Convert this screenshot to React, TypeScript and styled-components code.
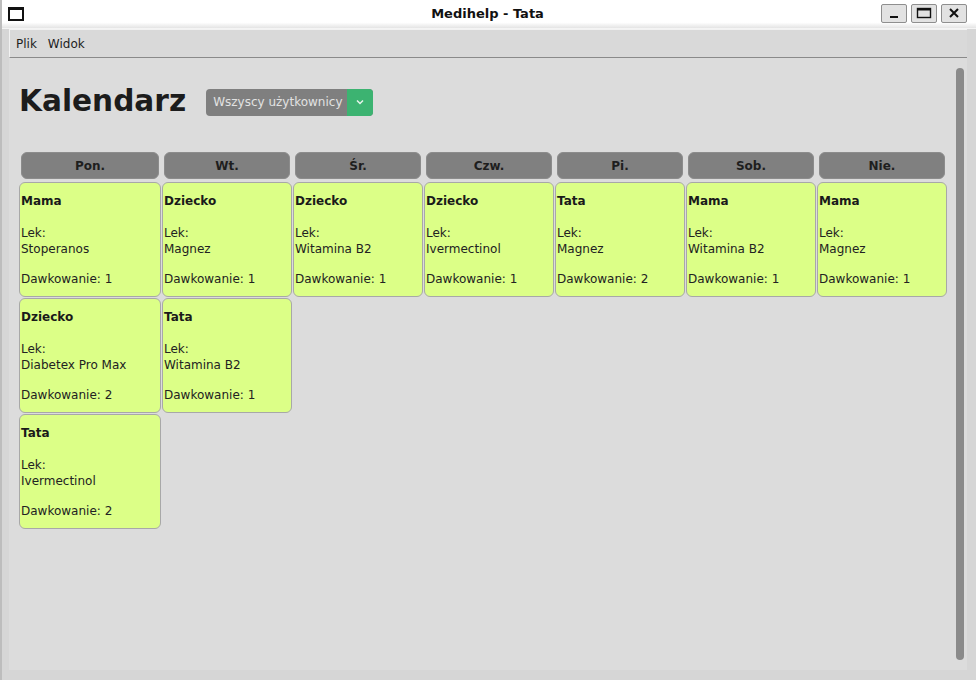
import React from 'react'
import styled, { createGlobalStyle } from 'styled-components'

const GlobalStyle = createGlobalStyle`
  html, body {
    margin: 0;
    padding: 0;
    background: #a8a8a8;
  }
  body {
    font-family: 'DejaVu Sans', 'Liberation Sans', sans-serif;
    font-size: 12px;
    color: #1e1e1e;
  }
`

const Window = styled.div`
  width: 976px;
  height: 680px;
  box-sizing: border-box;
  display: flex;
  flex-direction: column;
  background: #d6d6d6;
  border-left: 2px solid #bdbdbd;
  overflow: hidden;
`

const TitleBar = styled.div`
  height: 28px;
  flex-shrink: 0;
  display: flex;
  align-items: center;
  padding: 0 9px 0 6px;
  background: linear-gradient(#ffffff 0%, #ffffff 80%, #e4e4e4 100%);
  border-bottom: 1px solid #f4f4f4;
`

const TitleIcon = styled.div`
  width: 12px;
  height: 9px;
  border: 2px solid #111;
  border-top-width: 3px;
  background: #fff;
  margin-top: -1px;
`

const TitleText = styled.div`
  flex: 1;
  text-align: center;
  font-weight: bold;
  font-size: 13px;
  color: #111;
  padding-left: 70px;
  margin-top: -2px;
`

const WinButtons = styled.div`
  display: flex;
  gap: 4px;
  margin-top: -2px;
`

const WinButton = styled.div`
  width: 24px;
  height: 17px;
  border: 1px solid #8e8e8e;
  border-radius: 2px;
  background: #e2e2e2;
  display: flex;
  align-items: center;
  justify-content: center;
`

const Body = styled.div`
  flex: 1;
  display: flex;
  flex-direction: column;
  margin: 0 9px 0 7px;
  padding-bottom: 10px;
  box-shadow: 0 10px 0 #c0c0c0;
  min-height: 0;
`

const MenuBar = styled.div`
  flex-shrink: 0;
  display: flex;
  align-items: center;
  gap: 11px;
  padding-left: 6px;
  background: #d9d9d9;
  border-top: 1px solid #f2f2f2;
  border-left: 1px solid #f2f2f2;
  border-bottom: 1px solid #8a8a8a;
  box-sizing: border-box;
  height: 29px;
`

const MenuItem = styled.span`
  font-size: 12px;
  color: #1e1e1e;
`

const Client = styled.div`
  flex: 1;
  display: flex;
  background: #dcdcdc;
  min-height: 0;
`

const Main = styled.div`
  flex: 1;
  padding: 26px 0 0 10px;
`

const HeaderRow = styled.div`
  display: flex;
  align-items: center;
  gap: 20px;
  height: 35px;
`

const Heading = styled.h1`
  margin: 0;
  font-size: 29.6px;
  line-height: 35px;
  font-weight: bold;
  color: #1c1c1c;
`

const Combo = styled.div`
  display: flex;
  height: 27px;
  border-radius: 4px;
  overflow: hidden;
  background: #7f7f7f;
  margin-top: 1px;
`

const ComboText = styled.div`
  display: flex;
  align-items: center;
  padding: 0 5px 1px 7px;
  color: #e2e2e2;
  font-size: 12px;
`

const ComboArrow = styled.div`
  width: 26px;
  background: #3cb371;
  display: flex;
  align-items: center;
  justify-content: center;
`

const Week = styled.div`
  display: grid;
  grid-template-columns: 142px repeat(6, 130px);
  column-gap: 1px;
  margin-top: 33px;
  align-items: start;
`

const DayColumn = styled.div`
  display: flex;
  flex-direction: column;
  gap: 1px;
`

const DayHeader = styled.div`
  height: 27px;
  margin: 0 2px 2px;
  box-sizing: border-box;
  border-radius: 6px;
  background: #808080;
  border: 1px solid #8c8c8c;
  display: flex;
  align-items: center;
  justify-content: center;
  font-weight: bold;
  font-size: 12px;
  color: #1e1e1e;
`

const Card = styled.div`
  box-sizing: border-box;
  height: 115px;
  padding: 10px 2px 9px 1px;
  border: 1px solid #a8a8a8;
  border-radius: 6px;
  background: #dcff87;
  line-height: 16px;
  font-size: 12px;
  color: #222;
`

const Person = styled.div`
  font-weight: bold;
  color: #1a1a1a;
  margin-bottom: 16px;
`

const DoseLine = styled.div`
  margin-top: 14px;
`

const ScrollTrack = styled.div`
  width: 11px;
  padding: 10px 3px 10px 0;
  box-sizing: border-box;
  display: flex;
`

const ScrollThumb = styled.div`
  width: 8px;
  flex: 1;
  border-radius: 4px;
  background: #8a8a8a;
`

type Dose = { person: string; drug: string; amount: number }

const days: { name: string; doses: Dose[] }[] = [
  {
    name: 'Pon.',
    doses: [
      { person: 'Mama', drug: 'Stoperanos', amount: 1 },
      { person: 'Dziecko', drug: 'Diabetex Pro Max', amount: 2 },
      { person: 'Tata', drug: 'Ivermectinol', amount: 2 },
    ],
  },
  {
    name: 'Wt.',
    doses: [
      { person: 'Dziecko', drug: 'Magnez', amount: 1 },
      { person: 'Tata', drug: 'Witamina B2', amount: 1 },
    ],
  },
  { name: 'Śr.', doses: [{ person: 'Dziecko', drug: 'Witamina B2', amount: 1 }] },
  { name: 'Czw.', doses: [{ person: 'Dziecko', drug: 'Ivermectinol', amount: 1 }] },
  { name: 'Pi.', doses: [{ person: 'Tata', drug: 'Magnez', amount: 2 }] },
  { name: 'Sob.', doses: [{ person: 'Mama', drug: 'Witamina B2', amount: 1 }] },
  { name: 'Nie.', doses: [{ person: 'Mama', drug: 'Magnez', amount: 1 }] },
]

const DoseCard = ({ dose }: { dose: Dose }) => (
  <Card>
    <Person>{dose.person}</Person>
    <div>Lek:</div>
    <div>{dose.drug}</div>
    <DoseLine>Dawkowanie: {dose.amount}</DoseLine>
  </Card>
)

const App = () => (
  <>
    <GlobalStyle />
    <Window>
      <TitleBar>
        <TitleIcon />
        <TitleText>Medihelp - Tata</TitleText>
        <WinButtons>
          <WinButton>
            <svg width="12" height="12" viewBox="0 0 12 12">
              <rect x="2" y="9" width="8" height="2" fill="#111" />
            </svg>
          </WinButton>
          <WinButton>
            <svg width="16" height="12" viewBox="0 0 16 12">
              <rect x="1.5" y="1.5" width="13" height="9" fill="none" stroke="#111" strokeWidth="1.4" />
              <rect x="1" y="1" width="14" height="2.5" fill="#111" />
            </svg>
          </WinButton>
          <WinButton>
            <svg width="12" height="12" viewBox="0 0 12 12">
              <path d="M2 2 L10 10 M10 2 L2 10" stroke="#111" strokeWidth="2" />
            </svg>
          </WinButton>
        </WinButtons>
      </TitleBar>
      <Body>
        <MenuBar>
          <MenuItem>Plik</MenuItem>
          <MenuItem>Widok</MenuItem>
        </MenuBar>
        <Client>
          <Main>
            <HeaderRow>
              <Heading>Kalendarz</Heading>
              <Combo>
                <ComboText>Wszyscy użytkownicy</ComboText>
                <ComboArrow>
                  <svg width="8" height="6" viewBox="0 0 8 6">
                    <path d="M1 1.5 L4 4.5 L7 1.5" fill="none" stroke="#e8f4ec" strokeWidth="1.5" />
                  </svg>
                </ComboArrow>
              </Combo>
            </HeaderRow>
            <Week>
              {days.map((day) => (
                <DayColumn key={day.name}>
                  <DayHeader>{day.name}</DayHeader>
                  {day.doses.map((dose, i) => (
                    <DoseCard key={i} dose={dose} />
                  ))}
                </DayColumn>
              ))}
            </Week>
          </Main>
          <ScrollTrack>
            <ScrollThumb />
          </ScrollTrack>
        </Client>
      </Body>
    </Window>
  </>
)

export default App
